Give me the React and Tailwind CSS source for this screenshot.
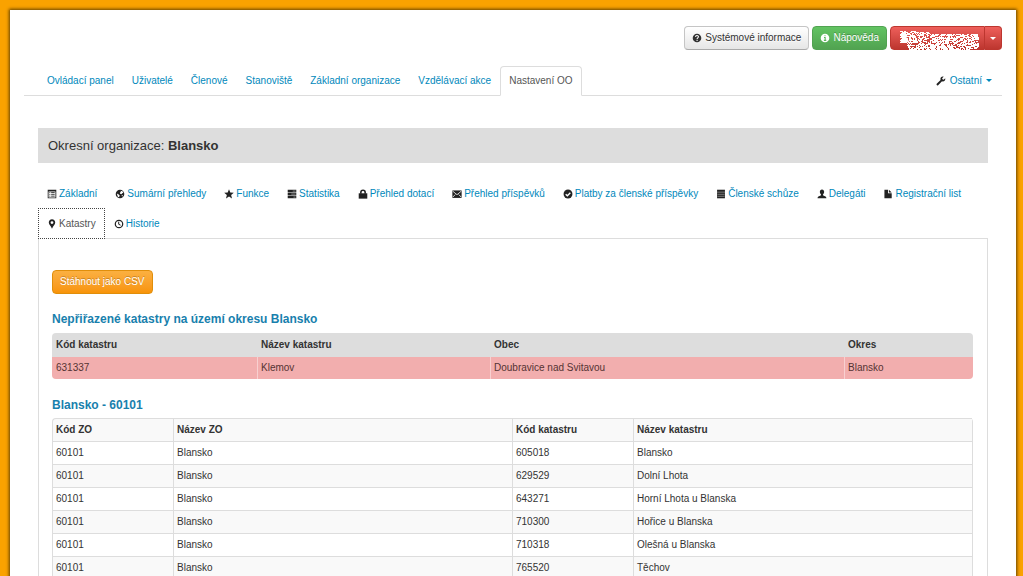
import React from 'react';

// 14x14 glyphs
const glyphs = {
  question: (
    <>
      <circle cx="7" cy="7" r="6" />
      <path d="M5 5.6C5 3 9 3 9 5.4 9 6.8 7.1 6.8 7.1 8.4M7.1 9.6v1.5" fill="none" stroke="#fff" strokeWidth="1.5" />
    </>
  ),
  info: (
    <>
      <circle cx="7" cy="7" r="6" />
      <path d="M7 3v1.7M5.6 6.2H7.2V10M5.4 10.3h3.4" fill="none" stroke="#5bb75b" strokeWidth="1.5" />
    </>
  ),
  list: (
    <>
      <path d="M1 1h12v12H1z M2.2 3.4v8.4h9.6V3.4z" fillRule="evenodd" />
      <path d="M3.3 5h1.4M5.8 5h5M3.3 7.5h1.4M5.8 7.5h5M3.3 10h1.4M5.8 10h5" fill="none" stroke="currentColor" strokeWidth="1.2" />
    </>
  ),
  globe: (
    <>
      <circle cx="7" cy="7" r="6" />
      <path d="M7.5 2.3l3 .8 1.2 2.4-1.8.3-.7 1.4-2-.4-.4-1.6L8.3 4zM2.6 6.4l2.6 1.2 1.4 1.5-1 2.6-1.7-1zM9 9l2.4-.6-1.2 2.2z" fill="#fff" />
    </>
  ),
  star: <path d="M7 .3l1.8 4.6 4.9.3L10 8.4l1.2 4.8L7 10.6l-4.2 2.6L4 8.4.3 5.2l4.9-.3z" />,
  tasks: (
    <>
      <path d="M1 1.2h12v3.3H1zM1 5.4h12v3.3H1zM1 9.6h12v3.3H1z" />
      <path d="M8 2.9h4M6 7.1h6M9 11.3h3" fill="none" stroke="#aaa" strokeWidth="1" />
    </>
  ),
  lock: (
    <>
      <path d="M1 6h12v7.5H1z" />
      <path d="M4 6.500V4.400c0-3.700 6-3.700 6 0v2.100" fill="none" stroke="currentColor" strokeWidth="2.2" />
    </>
  ),
  envelope: (
    <>
      <path d="M.5 2h13v10.5H.5z" />
      <path d="M1 3l6 5 6-5M1 11.5l3.600-3.800M13 11.500L9.400 7.700" fill="none" stroke="#fff" strokeWidth="1.1" />
    </>
  ),
  check: (
    <>
      <circle cx="7" cy="7" r="6.2" />
      <path d="M3.8 7.2l2.3 2.2 4.2-4.2" fill="none" stroke="#fff" strokeWidth="1.9" />
    </>
  ),
  calendar: (
    <>
      <path d="M1.5 1h11v12h-11z" />
      <path d="M1.5 4.4h11M2 7.4h10M2 10.2h10" fill="none" stroke="#aaa" strokeWidth=".9" />
    </>
  ),
  user: <path d="M7 .8c2 0 3 1.4 3 3.2 0 1.5-.6 2.8-1.5 3.5v1.3c1 .8 4.7 1.2 4.7 4.2H.8c0-3 3.7-3.4 4.7-4.2V7.5C4.6 6.8 4 5.5 4 4 4 2.2 5 .8 7 .8z" />,
  file: <path d="M2 1h5v5h5.2v7H2zM8.2 1l4 4h-4z" />,
  marker: <path d="M7 .5c2.7 0 4.5 2 4.5 4.4C11.500 7.600 8.600 9.800 7 13.600 5.400 9.800 2.500 7.600 2.500 4.900 2.500 2.500 4.300.5 7 .5zM7 3a2 2 0 100 4 2 2 0 000-4z" fillRule="evenodd" />,
  clock: (
    <>
      <circle cx="7" cy="7" r="5.2" fill="none" stroke="currentColor" strokeWidth="1.7" />
      <path d="M6.6 3.8v3.6l2.6 1.2" fill="none" stroke="currentColor" strokeWidth="1.4" />
    </>
  ),
  wrench: <path d="M12.9 3.2l-2.2 2-1.7-.5-.4-1.7 2.1-2.1C8.5.1 6 1.7 6.2 4.5L6.4 5.6 1 11c-1 1.3.7 3 2 2l5.4-5.5c2.7 1 5.2-1.2 4.5-4.3z" />,
};

function Icon({ name, className = '' }) {
  return (
    <svg viewBox="0 0 14 14" fill="currentColor" aria-hidden="true" className={`h-[10px] w-[10px] shrink-0 ${className}`}>
      {glyphs[name]}
    </svg>
  );
}

const mainTabs = [
  'Ovládací panel',
  'Uživatelé',
  'Členové',
  'Stanoviště',
  'Základní organizace',
  'Vzdělávací akce',
  'Nastavení OO',
];

const subTabs = [
  ['list', 'Základní'],
  ['globe', 'Sumární přehledy'],
  ['star', 'Funkce'],
  ['tasks', 'Statistika'],
  ['lock', 'Přehled dotací'],
  ['envelope', 'Přehled příspěvků'],
  ['check', 'Platby za členské příspěvky'],
  ['calendar', 'Členské schůze'],
  ['user', 'Delegáti'],
  ['file', 'Registrační list'],
  ['marker', 'Katastry'],
  ['clock', 'Historie'],
];

const katastry = [
  ['60101', 'Blansko', '605018', 'Blansko'],
  ['60101', 'Blansko', '629529', 'Dolní Lhota'],
  ['60101', 'Blansko', '643271', 'Horní Lhota u Blanska'],
  ['60101', 'Blansko', '710300', 'Hořice u Blanska'],
  ['60101', 'Blansko', '710318', 'Olešná u Blanska'],
  ['60101', 'Blansko', '765520', 'Těchov'],
];

// white spray over the account name
const specks = Array.from({ length: 1150 }, (_, i) => {
  const a = Math.abs(Math.sin(i * 12.9898 + 1) * 43758.5453) % 1;
  const b = Math.abs(Math.sin(i * 78.233 + 2) * 24634.6345) % 1;
  const x = Math.floor(a * 78);
  const top = x < 16 ? 0 : x < 30 ? 1 : 3;
  const bottom = x < 7 ? 12 : x < 70 ? 20 : 18;
  return [x, Math.floor(top + b * (bottom - top))];
});

export default function App() {
  return (
    <div className="min-h-screen bg-[#faa200] pt-[10px] pr-[7px] pb-[10px] pl-[10px] font-['Liberation_Sans',Arial,sans-serif] text-[10px] leading-4 text-[#333]">
      <div className="bg-white px-[14px] pt-4 pb-6 shadow-[0_0_3px_1px_rgba(60,40,0,0.8)]">
        <header className="flex justify-end gap-[3px]">
          <button type="button" className="flex h-6 items-center gap-[3px] rounded border border-[#c5c5c5] border-b-[#aaa] bg-linear-to-b from-white to-[#e6e6e6] px-[7px] [text-shadow:0_1px_1px_rgba(255,255,255,0.75)]">
            <Icon name="question" />
            Systémové informace
          </button>
          <button type="button" className="flex h-6 items-center gap-[3px] rounded border border-[#51a351] bg-linear-to-b from-[#62c462] to-[#51a351] px-[7px] text-white [text-shadow:0_-1px_0_rgba(0,0,0,0.25)]">
            <Icon name="info" />
            Nápověda
          </button>
          <div className="flex">
            <button type="button" aria-label="Účet" className="relative flex h-6 w-[95px] items-center rounded-l border border-[#bd362f] bg-linear-to-b from-[#ee5f5b] to-[#bd362f] px-[9px] text-white">
              <Icon name="user" />
              <svg viewBox="0 0 80 20" fill="#fff" aria-hidden="true" className="absolute top-1 left-[9px] h-5 w-20">
                {specks.map(([x, y], i) => (
                  <rect key={i} x={x} y={y} width={i % 3 ? 1 : 2} height="1" />
                ))}
              </svg>
            </button>
            <button type="button" aria-label="Nabídka účtu" className="flex h-6 w-[17px] items-center justify-center rounded-r border border-l-0 border-[#bd362f] bg-linear-to-b from-[#ee5f5b] to-[#bd362f] text-white">
              <svg viewBox="0 0 6 3" fill="currentColor" aria-hidden="true" className="h-[3px] w-[6px]">
                <path d="M0 0h6L3 3z" />
              </svg>
            </button>
          </div>
        </header>

        <nav className="mt-4 flex border-b border-[#ddd] px-[14px]">
          {mainTabs.map((tab) => (
            <a
              key={tab}
              href="#"
              className={`-mb-px rounded-t border px-2 py-[6px] ${
                tab === 'Nastavení OO' ? 'border-[#ddd] border-b-white bg-white text-[#555]' : 'border-transparent text-[#0088bb]'
              }`}
            >
              {tab}
            </a>
          ))}
          <a href="#" className="-mr-[14px] ml-auto flex items-center gap-1 px-[10px] text-[#0088bb]">
            <Icon name="wrench" className="text-[#222]" />
            Ostatní
            <svg viewBox="0 0 6 3" fill="currentColor" aria-hidden="true" className="h-[3px] w-[6px]">
              <path d="M0 0h6L3 3z" />
            </svg>
          </a>
        </nav>

        <main className="mt-8 px-[14px]">
          <h1 className="bg-[#ddd] px-[10px] py-2 text-[13px] leading-[19px]">
            Okresní organizace: <strong>Blansko</strong>
          </h1>

          <nav className="mt-[15px] flex flex-wrap border-b border-[#ddd]">
            {subTabs.map(([icon, label]) => (
              <a
                key={label}
                href="#"
                className={`-mb-px flex h-[31px] items-center gap-[2px] border px-2 ${
                  label === 'Katastry' ? 'border-dotted border-[#444] bg-white text-[#555]' : 'border-transparent text-[#0088bb]'
                }`}
              >
                <Icon name={icon} className="text-[#222]" />
                {label}
              </a>
            ))}
          </nav>

          <section className="border-x border-[#ddd] pt-[31px] pr-[14px] pb-5 pl-[13px]">
            <button type="button" className="h-6 rounded border border-[#e08e0b] bg-linear-to-b from-[#fbb040] to-[#f89406] px-[7px] text-white [text-shadow:0_-1px_0_rgba(0,0,0,0.25)]">
              Stáhnout jako CSV
            </button>

            <h2 className="mt-4 text-[12px] leading-[18px] font-bold text-[#1880ad]">Nepřiřazené katastry na území okresu Blansko</h2>
            <table className="mt-[5px] w-full table-fixed border-separate border-spacing-0 overflow-hidden rounded text-left">
              <thead>
                <tr className="bg-[#ddd]">
                  <th className="w-[205px] p-1">Kód katastru</th>
                  <th className="w-[233px] p-1">Název katastru</th>
                  <th className="p-1">Obec</th>
                  <th className="w-[129px] p-1">Okres</th>
                </tr>
              </thead>
              <tbody>
                <tr className="bg-[#f2aeae] text-[#553333]">
                  <td className="px-1 py-[3px]">631337</td>
                  <td className="border-l border-[#f8d0d0] px-[3px] py-[3px]">Klemov</td>
                  <td className="border-l border-[#f8d0d0] px-[3px] py-[3px]">Doubravice nad Svitavou</td>
                  <td className="border-l border-[#f8d0d0] px-[3px] py-[3px]">Blansko</td>
                </tr>
              </tbody>
            </table>

            <h2 className="mt-[17px] text-[12px] leading-[18px] font-bold text-[#1880ad]">Blansko - 60101</h2>
            <table className="mt-1 w-full table-fixed border-separate border-spacing-0 rounded border-r border-b border-[#ddd] text-left">
              <thead>
                <tr className="bg-[#f9f9f9]">
                  <th className="w-[121px] rounded-tl border-t border-l border-[#ddd] p-[3px]">Kód ZO</th>
                  <th className="border-t border-l border-[#ddd] p-[3px]">Název ZO</th>
                  <th className="w-[121px] border-t border-l border-[#ddd] p-[3px]">Kód katastru</th>
                  <th className="border-t border-l border-[#ddd] p-[3px]">Název katastru</th>
                </tr>
              </thead>
              <tbody>
                {katastry.map((row) => (
                  <tr key={row[2]} className="even:bg-[#f9f9f9]">
                    {row.map((cell, i) => (
                      <td key={i} className="border-t border-l border-[#ddd] p-[3px]">
                        {cell}
                      </td>
                    ))}
                  </tr>
                ))}
              </tbody>
            </table>
          </section>
        </main>
      </div>
    </div>
  );
}
